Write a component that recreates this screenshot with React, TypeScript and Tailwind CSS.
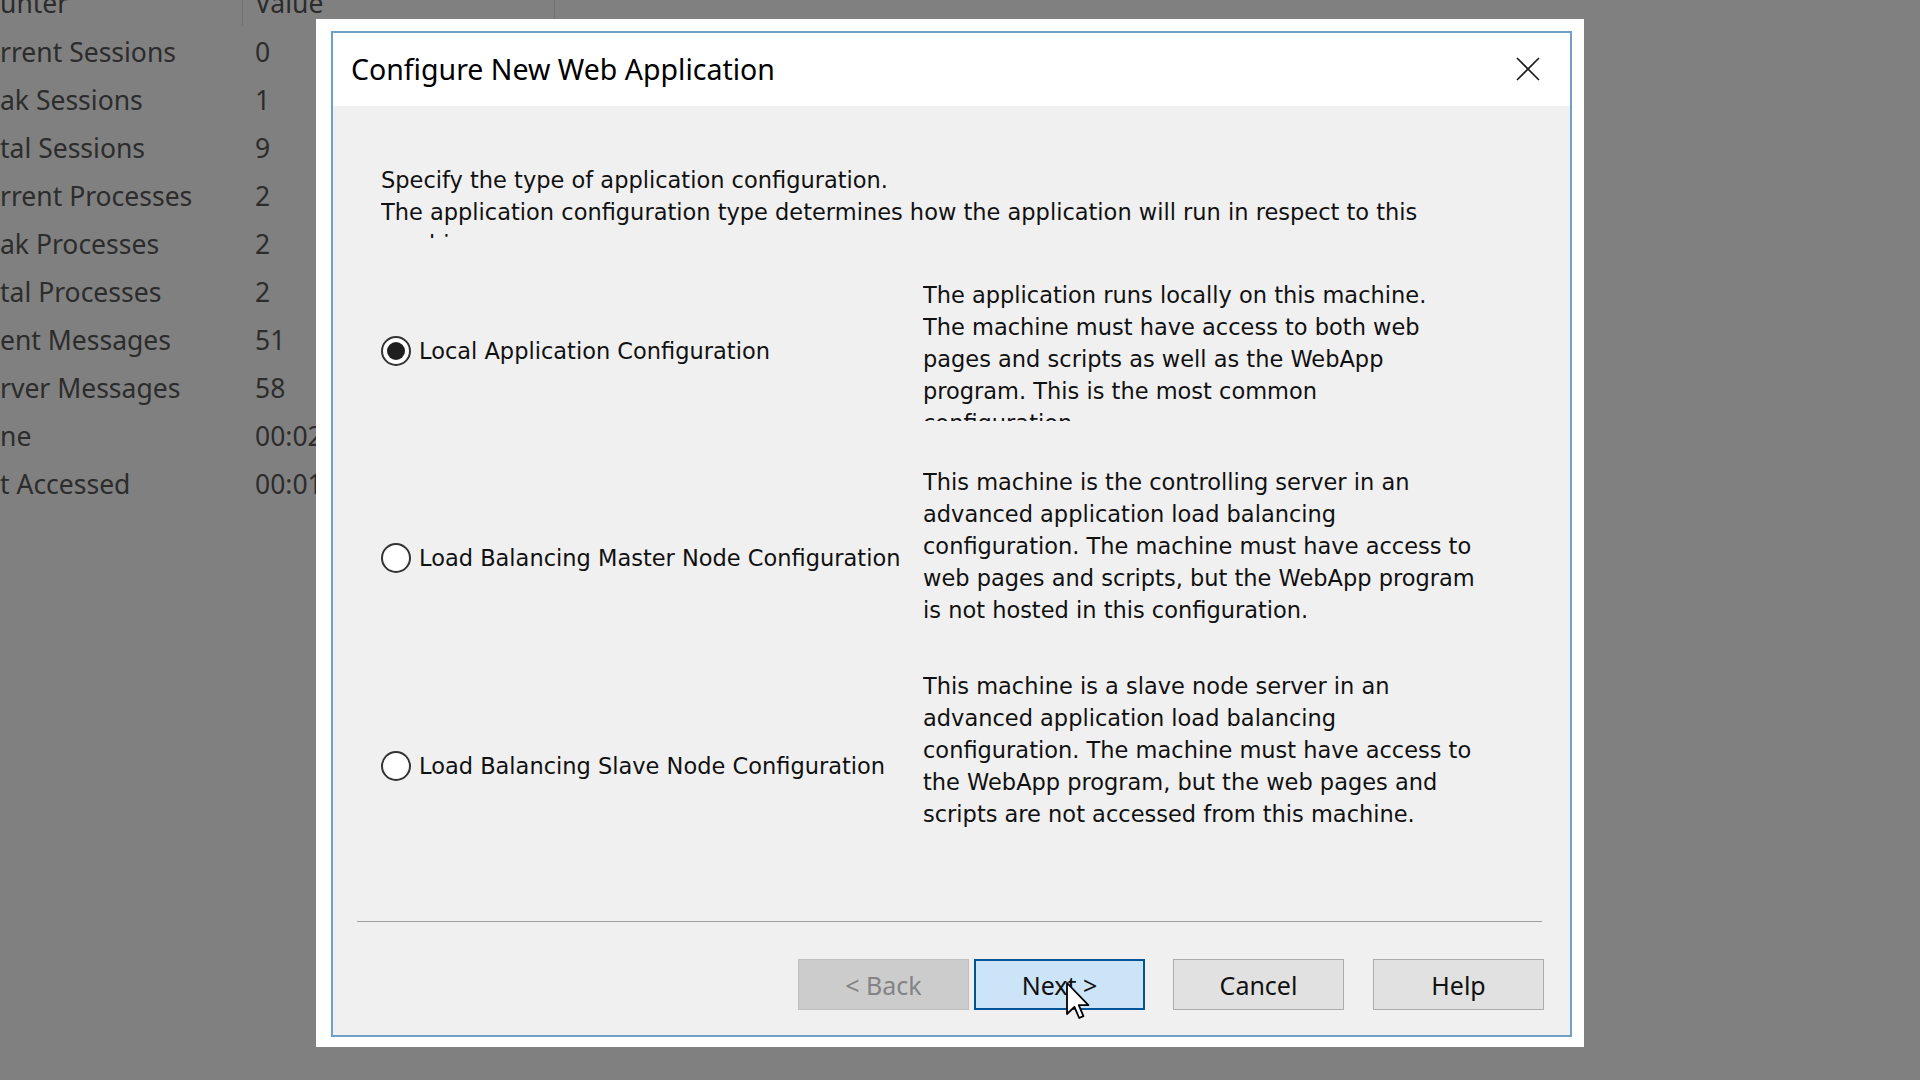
import React from 'react'

const rows: [string, string][] = [
  ['rrent Sessions', '0'],
  ['ak Sessions', '1'],
  ['tal Sessions', '9'],
  ['rrent Processes', '2'],
  ['ak Processes', '2'],
  ['tal Processes', '2'],
  ['ent Messages', '51'],
  ['rver Messages', '58'],
  ['ne', '00:02:41'],
  ['t Accessed', '00:01:12'],
]

const options = [
  {
    label: 'Local Application Configuration',
    checked: true,
    rowH: 'h-[187px]',
    radioTop: 'mt-[56px]',
    descH: 'h-[142px]',
    lines: [
      'The application runs locally on this machine.',
      'The machine must have access to both web',
      'pages and scripts as well as the WebApp',
      'program. This is the most common',
      'configuration.',
    ],
  },
  {
    label: 'Load Balancing Master Node Configuration',
    checked: false,
    rowH: 'h-[204px]',
    radioTop: 'mt-[76px]',
    descH: 'h-[160px]',
    lines: [
      'This machine is the controlling server in an',
      'advanced application load balancing',
      'configuration. The machine must have access to',
      'web pages and scripts, but the WebApp program',
      'is not hosted in this configuration.',
    ],
  },
  {
    label: 'Load Balancing Slave Node Configuration',
    checked: false,
    rowH: 'h-[160px]',
    radioTop: 'mt-[80px]',
    descH: 'h-[160px]',
    lines: [
      'This machine is a slave node server in an',
      'advanced application load balancing',
      'configuration. The machine must have access to',
      'the WebApp program, but the web pages and',
      'scripts are not accessed from this machine.',
    ],
  },
]

function Radio({ checked }: { checked: boolean }) {
  return (
    <span className="w-[30px] h-[30px] shrink-0 rounded-full border-2 border-[#333333] bg-white flex items-center justify-center">
      {checked && <span className="w-[18px] h-[18px] rounded-full bg-[#1f1f1f]" />}
    </span>
  )
}

function Cursor() {
  return (
    <svg
      className="absolute left-[1066px] top-[982px]"
      width="24"
      height="38"
      viewBox="0 0 12 19"
    >
      <path
        d="M0.5 0.5 L0.5 16 L4.2 12.4 L6.6 18 L8.7 17.1 L6.4 11.6 L11.2 11.6 Z"
        fill="#ffffff"
        stroke="#000000"
        strokeWidth="0.9"
        strokeLinejoin="round"
      />
    </svg>
  )
}

export default function App() {
  return (
    <div className="relative w-[1920px] h-[1080px] overflow-hidden bg-[#808080] font-['Noto_Sans',sans-serif]">
      {/* Background counter list */}
      <div className="-mt-[19px] text-[26.5px] text-[#2c2c2c]">
        <div className="flex h-[48px]">
          <div className="w-[243px] h-[45px] border-r border-[#737373] flex items-center">unter</div>
          <div className="w-[312px] h-[45px] border-r border-[#737373] flex items-center pl-[12px]">Value</div>
        </div>
        {rows.map(([name, value]) => (
          <div key={name} className="flex h-[48px] items-center">
            <div className="w-[243px] whitespace-nowrap">{name}</div>
            <div className="pl-[12px] whitespace-nowrap">{value}</div>
          </div>
        ))}
      </div>

      {/* Dialog */}
      <div className="absolute left-[316px] top-[19px] w-[1268px] h-[1028px] bg-white pl-[15px] pt-[12px] pr-[12px] pb-[10px]">
        <div className="w-full h-full border-2 border-[#6fa0c8] flex flex-col overflow-hidden">
          {/* Title bar */}
          <div className="h-[73px] shrink-0 bg-white flex items-center justify-between pl-[18px] pr-[30px]">
            <span className="text-[28.5px] text-black">Configure New Web Application</span>
            <svg width="24" height="24" viewBox="0 0 24 24" className="-mt-[2px]">
              <path d="M1 1 L23 23 M23 1 L1 23" stroke="#1a1a1a" strokeWidth="1.6" />
            </svg>
          </div>

          {/* Body */}
          <div className="flex-1 bg-[#f0f0f0] px-[24px] pt-[58px] flex flex-col font-['DejaVu_Sans',sans-serif] text-[22.5px] leading-[32px] text-[#111111]">
            <div className="pl-[24px]">
              <div className="h-[74px] overflow-hidden">
                <div className="whitespace-nowrap">Specify the type of application configuration.</div>
                <div className="whitespace-nowrap">
                  The application configuration type determines how the application will run in respect to this
                </div>
                <div className="whitespace-nowrap">machine.</div>
              </div>

              <div className="mt-[41px] flex flex-col">
                {options.map((o) => (
                  <div key={o.label} className={`flex ${o.rowH}`}>
                    <div className="w-[542px] shrink-0">
                      <div className={`flex items-center gap-[8px] ${o.radioTop}`}>
                        <Radio checked={o.checked} />
                        <span className="whitespace-nowrap">{o.label}</span>
                      </div>
                    </div>
                    <div className={`${o.descH} overflow-hidden`}>
                      {o.lines.map((l) => (
                        <div key={l} className="whitespace-nowrap">
                          {l}
                        </div>
                      ))}
                    </div>
                  </div>
                ))}
              </div>
            </div>

            <div className="mt-[91px] h-px bg-[#a0a0a0] mr-[4px]" />

            <div className="mt-[37px] flex justify-end pr-[2px] font-['Noto_Sans',sans-serif] text-[25px]">
              <button className="w-[171px] h-[51px] bg-[#cccccc] border border-[#bfbfbf] text-[#838383]">
                &lt; Back
              </button>
              <button className="ml-[5px] w-[171px] h-[51px] bg-[#cce4f7] border-2 border-[#005499] text-[#111111]">
                Next &gt;
              </button>
              <button className="ml-[28px] w-[171px] h-[51px] bg-[#e1e1e1] border border-[#adadad] text-[#111111]">
                Cancel
              </button>
              <button className="ml-[29px] w-[171px] h-[51px] bg-[#e1e1e1] border border-[#adadad] text-[#111111]">
                Help
              </button>
            </div>
          </div>
        </div>
      </div>

      <Cursor />
    </div>
  )
}
